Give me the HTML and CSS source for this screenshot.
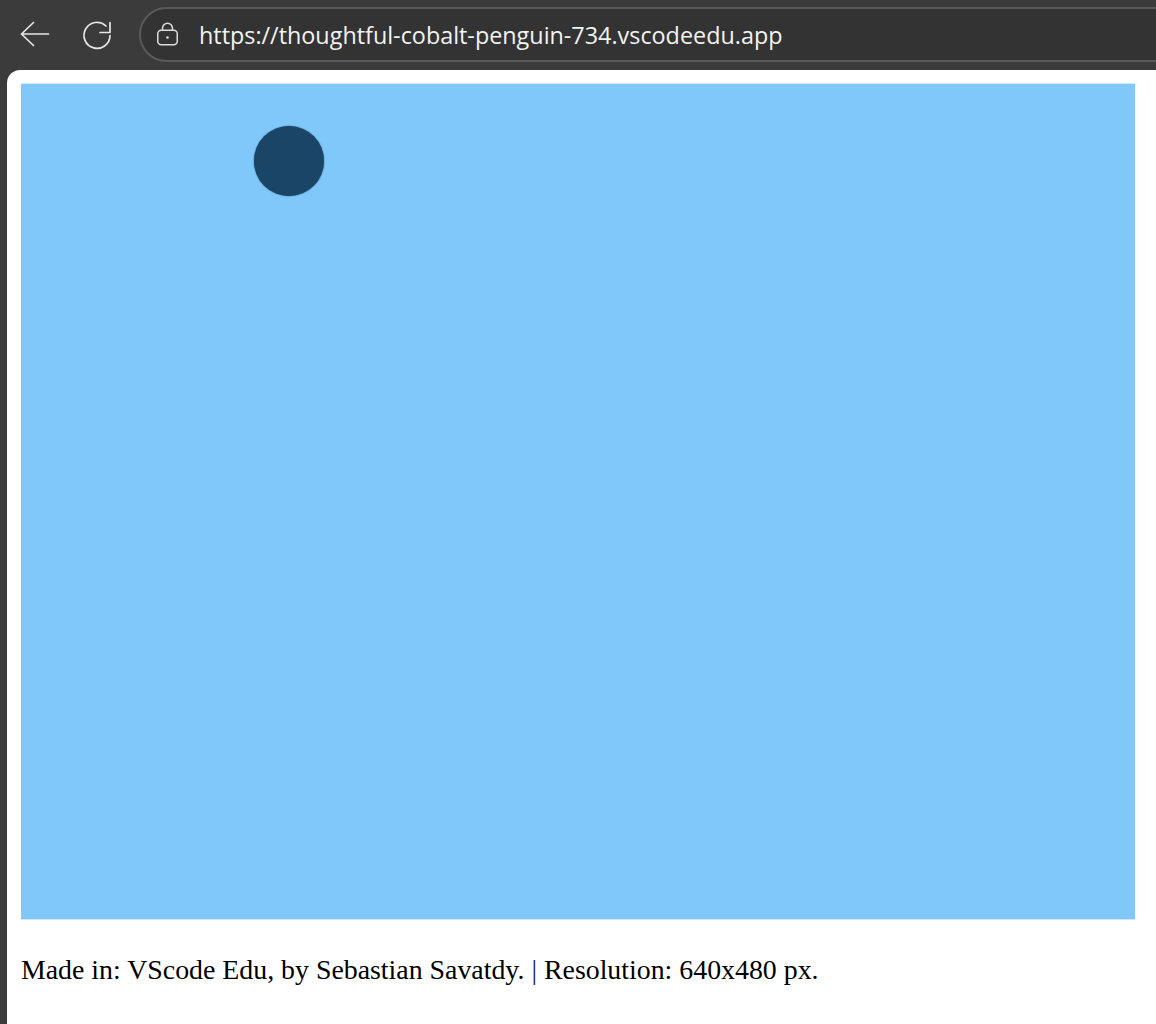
FILE: index.html
```html
<!DOCTYPE html>
<html lang="en">
<head>
<meta charset="utf-8">
<title>thoughtful-cobalt-penguin-734</title>
<link rel="stylesheet" href="styles.css">
</head>
<body>
<div class="window">
  <header class="toolbar">
    <button class="nav-btn back" aria-label="Back">
      <svg width="32" height="28" viewBox="0 0 32 28" fill="none" stroke="#e6e6e6" stroke-width="1.700" stroke-linecap="round" stroke-linejoin="round"><path d="M2.500 13H29.500M14.500 1.500L2.500 13L14.500 24.500"/></svg>
    </button>
    <button class="nav-btn reload" aria-label="Reload">
      <svg width="32" height="32" viewBox="0 0 32 32" fill="none" stroke="#e6e6e6" stroke-width="1.700" stroke-linecap="round" stroke-linejoin="round"><path d="M29 16.500A13 13 0 1 1 25 7"/><path d="M29 3.500V13.500H19"/></svg>
    </button>
    <div class="address">
      <svg class="lock" width="24" height="26" viewBox="0 0 24 26" fill="none" stroke="#dcdcdc" stroke-width="1.500"><rect x="0.750" y="8.250" width="19.500" height="14.500" rx="3.500"/><path d="M5.500 8V6.250A5 5 0 0 1 15.500 6.250V8"/><circle cx="10.500" cy="15.500" r="1.300" fill="#dcdcdc" stroke="none"/></svg>
      <span class="url">https://thoughtful-cobalt-penguin-734.vscodeedu.app</span>
    </div>
  </header>
  <main class="viewport">
    <div class="page">
      <div class="canvas"><div class="ball"></div></div>
      <p class="credit">Made in: VScode Edu, by Sebastian Savatdy. <span class="sep">|</span> Resolution: 640x480 px.</p>
    </div>
  </main>
</div>
</body>
</html>
```
FILE: styles.css
```css
* { box-sizing: border-box; }
html, body { margin: 0; height: 100%; overflow: hidden; }
body { background: #3b3b3b; }
.window { display: flex; flex-direction: column; height: 1024px; }
.toolbar {
  height: 70px;
  flex: none;
  display: flex;
  align-items: center;
  background: #3b3b3b;
  padding: 0 0 1px 19px;
}
.nav-btn {
  background: none;
  border: 0;
  padding: 0;
  display: flex;
  align-items: center;
  justify-content: center;
}
.back { width: 32px; margin-right: 30px; }
.reload { width: 32px; margin-right: 26px; }
.address {
  flex: 1;
  height: 55px;
  margin-right: -40px;
  display: flex;
  align-items: center;
  background: #333333;
  border: 2px solid #5a5a5a;
  border-radius: 28px;
  padding-left: 16px;
}
.lock { flex: none; margin-right: 18px; }
.url {
  font-family: "Open Sans", "Noto Sans", sans-serif;
  font-size: 23.36px;
  color: #f2f2f2;
  white-space: nowrap;
}
.viewport { flex: 1; padding-left: 7px; min-height: 0; }
.page {
  height: 100%;
  background: #fff;
  border-top-left-radius: 13px;
  padding: 14px 21px 0 14px;
}
.canvas {
  position: relative;
  height: 835px;
  background: #80c8fa;
  box-shadow: 0 1px 0 #cfe9fd, 0 -1px 0 #cfe9fd;
}
.ball {
  position: absolute;
  left: 233px;
  top: 42px;
  width: 70px;
  height: 70px;
  border-radius: 50%;
  background: #1a4567;
  box-shadow: 0 0 1.500px #1a4567;
}
.credit {
  margin: 35px 0 0;
  font-family: "Liberation Serif", "Times New Roman", serif;
  font-size: 27.85px;
  line-height: 32px;
  color: #000;
  white-space: nowrap;
}
.sep { color: #14286e; }
```
